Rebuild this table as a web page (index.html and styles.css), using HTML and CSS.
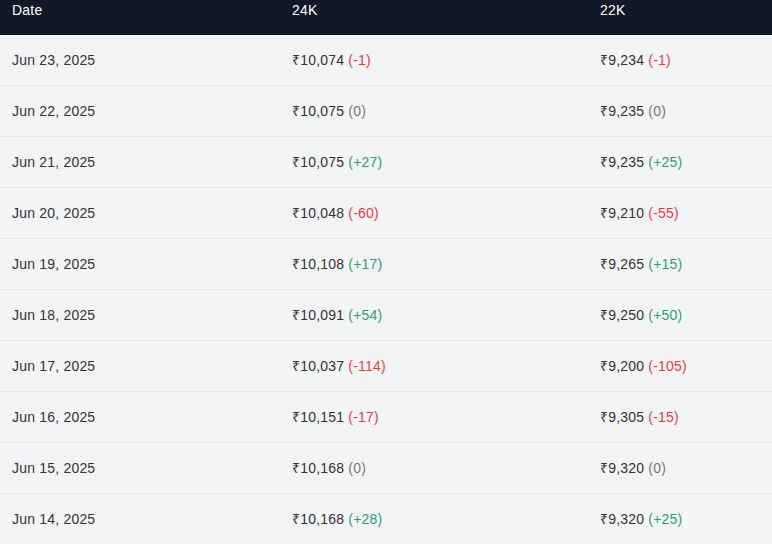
FILE: index.html
```html
<!DOCTYPE html>
<html>
<head>
<meta charset="utf-8">
<link rel="stylesheet" href="styles.css">
</head>
<body>
<div class="table">
  <div class="row head">
    <div class="cell c1">Date</div>
    <div class="cell c2">24K</div>
    <div class="cell c3">22K</div>
  </div>
  <div class="row"><div class="cell c1">Jun 23, 2025</div><div class="cell c2">₹10,074 <span class="dn">(-1)</span></div><div class="cell c3">₹9,234 <span class="dn">(-1)</span></div></div>
  <div class="row"><div class="cell c1">Jun 22, 2025</div><div class="cell c2">₹10,075 <span class="eq">(0)</span></div><div class="cell c3">₹9,235 <span class="eq">(0)</span></div></div>
  <div class="row"><div class="cell c1">Jun 21, 2025</div><div class="cell c2">₹10,075 <span class="up">(+27)</span></div><div class="cell c3">₹9,235 <span class="up">(+25)</span></div></div>
  <div class="row"><div class="cell c1">Jun 20, 2025</div><div class="cell c2">₹10,048 <span class="dn">(-60)</span></div><div class="cell c3">₹9,210 <span class="dn">(-55)</span></div></div>
  <div class="row"><div class="cell c1">Jun 19, 2025</div><div class="cell c2">₹10,108 <span class="up">(+17)</span></div><div class="cell c3">₹9,265 <span class="up">(+15)</span></div></div>
  <div class="row"><div class="cell c1">Jun 18, 2025</div><div class="cell c2">₹10,091 <span class="up">(+54)</span></div><div class="cell c3">₹9,250 <span class="up">(+50)</span></div></div>
  <div class="row"><div class="cell c1">Jun 17, 2025</div><div class="cell c2">₹10,037 <span class="dn">(-114)</span></div><div class="cell c3">₹9,200 <span class="dn">(-105)</span></div></div>
  <div class="row"><div class="cell c1">Jun 16, 2025</div><div class="cell c2">₹10,151 <span class="dn">(-17)</span></div><div class="cell c3">₹9,305 <span class="dn">(-15)</span></div></div>
  <div class="row"><div class="cell c1">Jun 15, 2025</div><div class="cell c2">₹10,168 <span class="eq">(0)</span></div><div class="cell c3">₹9,320 <span class="eq">(0)</span></div></div>
  <div class="row"><div class="cell c1">Jun 14, 2025</div><div class="cell c2">₹10,168 <span class="up">(+28)</span></div><div class="cell c3">₹9,320 <span class="up">(+25)</span></div></div>
</div>
</body>
</html>
```
FILE: styles.css
```css
html, body {
  margin: 0;
  padding: 0;
  background: #f3f4f6;
  overflow: hidden;
}
body {
  font-family: "Liberation Sans", Arial, sans-serif;
  font-size: 14px;
  letter-spacing: 0.2px;
  color: #333333;
}
.table {
  display: flex;
  flex-direction: column;
}
.row {
  display: grid;
  grid-template-columns: 280px 308px 1fr;
  height: 50px;
  align-items: center;
  border-bottom: 1px solid #e5e7eb;
}
.row.head {
  height: 35px;
  align-items: start;
  background: #111827;
  color: #ffffff;
  border-bottom: none;
}
.head .cell {
  padding-top: 2px;
  line-height: 16px;
}
.cell {
  padding-left: 12px;
  line-height: 16px;
}
.dn { color: #e53e3e; }
.up { color: #2f9e6b; }
.eq { color: #777777; }
```
